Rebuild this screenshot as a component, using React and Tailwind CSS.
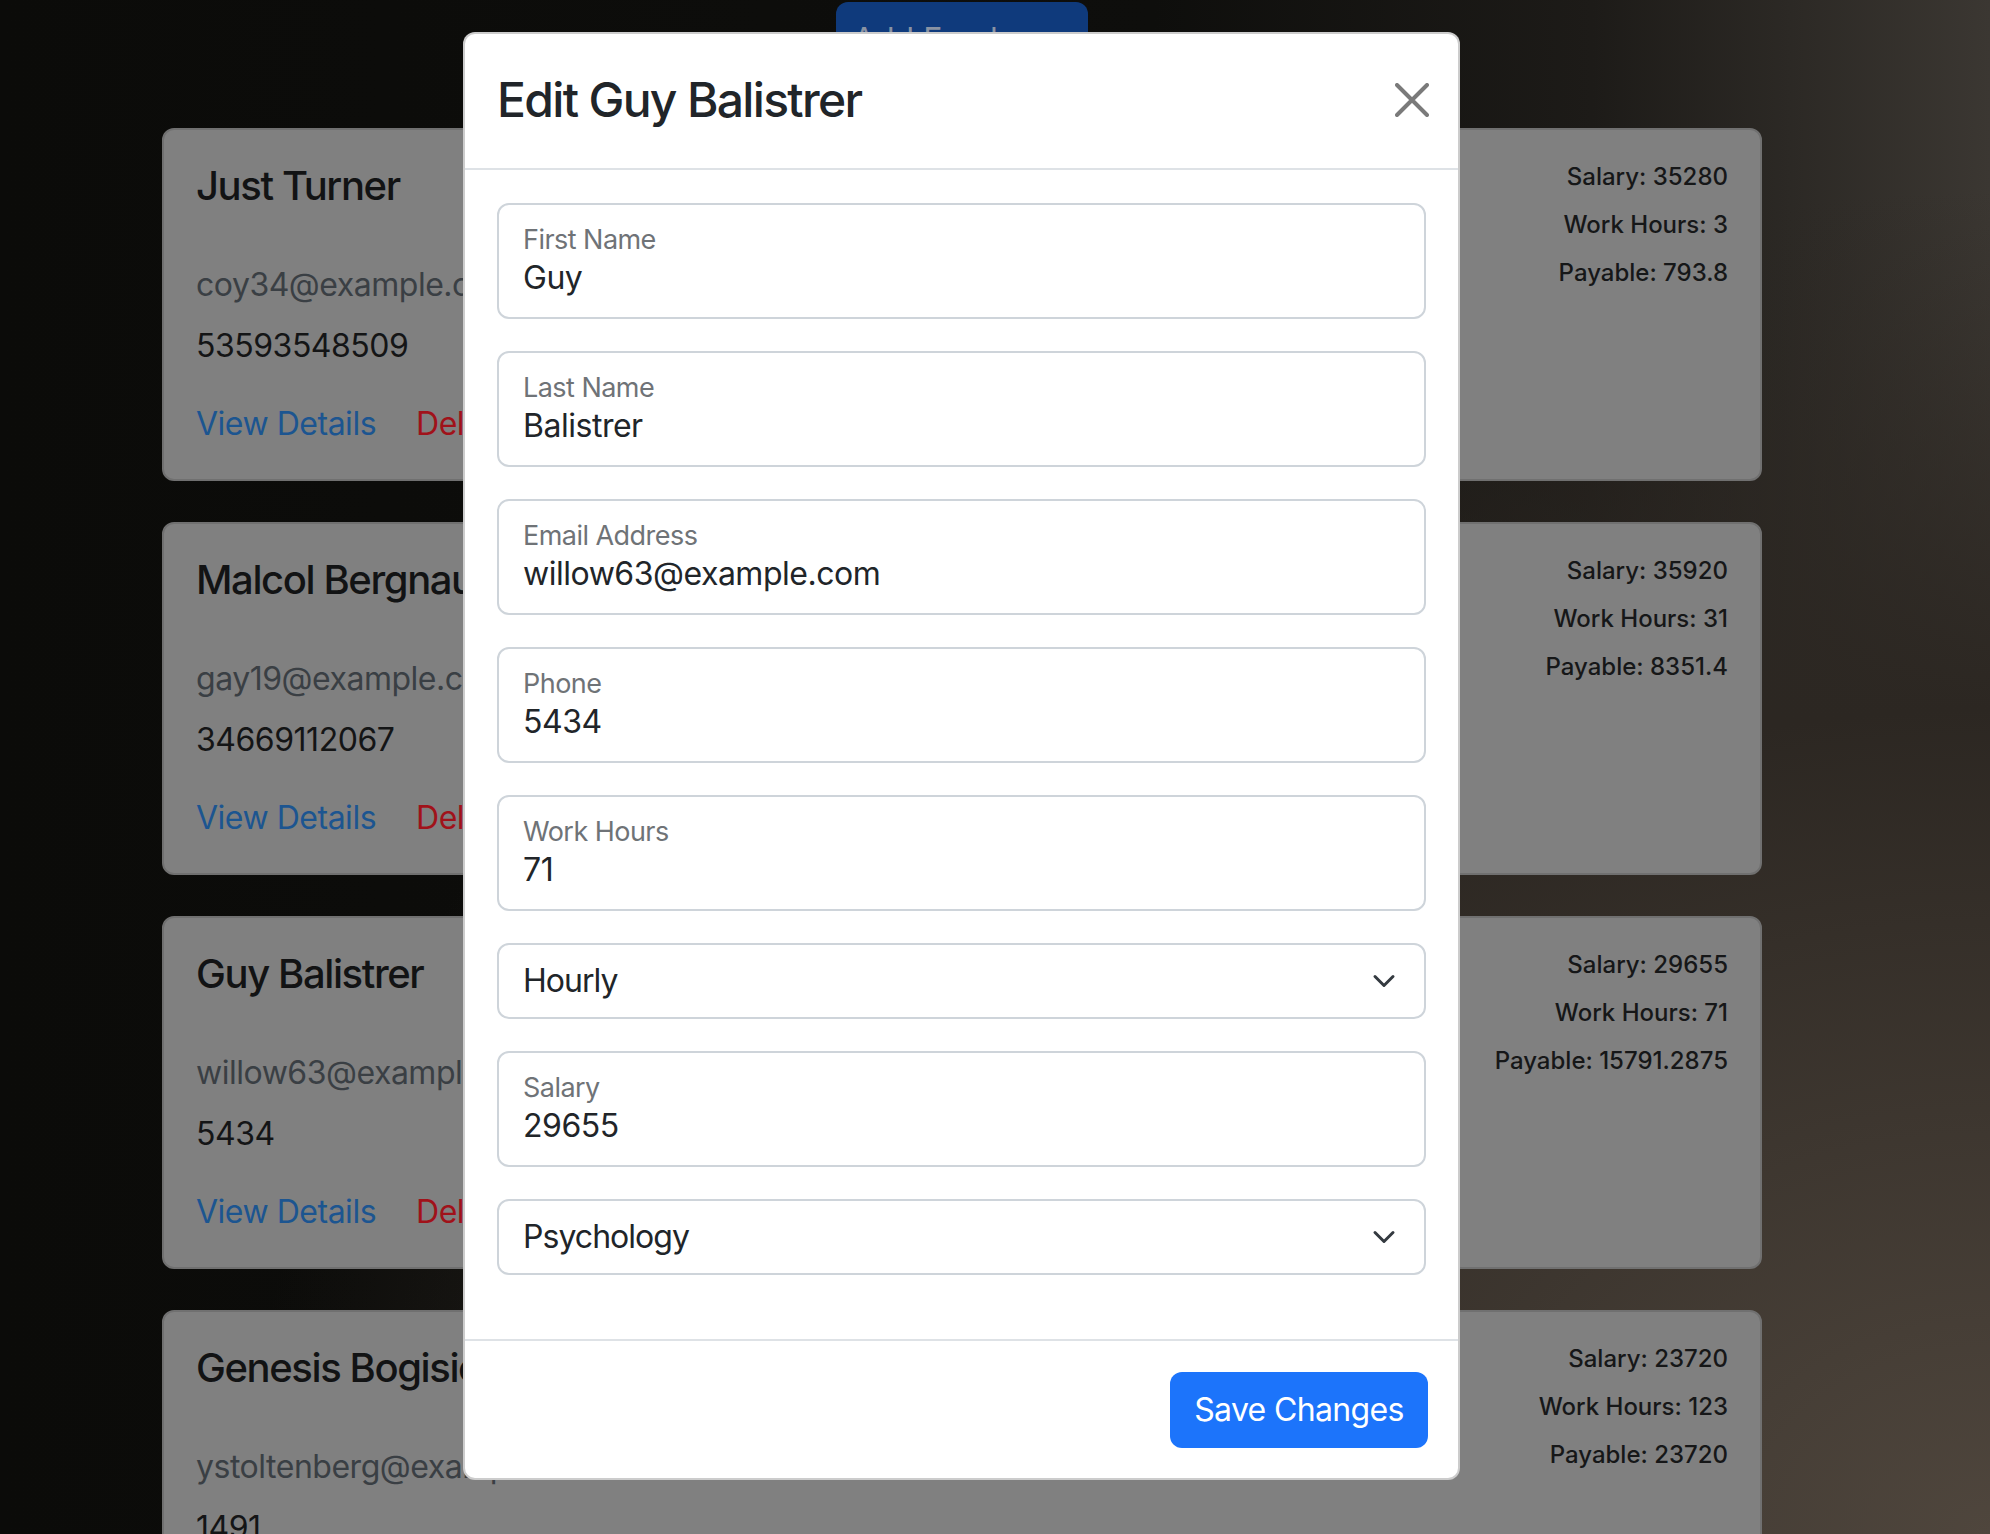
import React from "react";

const employees = [
  { name: "Just Turner", email: "coy34@example.com", phone: "53593548509", salary: "35280", hours: "3", payable: "793.8" },
  { name: "Malcol Bergnaum", email: "gay19@example.com", phone: "34669112067", salary: "35920", hours: "31", payable: "8351.4" },
  { name: "Guy Balistrer", email: "willow63@example.com", phone: "5434", salary: "29655", hours: "71", payable: "15791.2875" },
  { name: "Genesis Bogisich", email: "ystoltenberg@example.com", phone: "1491", salary: "23720", hours: "123", payable: "23720" },
];

function EmployeeCard({ emp }) {
  return (
    <div className="flex h-[353px] shrink-0 justify-between rounded-[12px] border-2 border-[#707070] bg-[#808080] p-[32px]">
      <div className="flex flex-col tracking-[-0.03em]">
        <h5 className="text-[40px] font-medium leading-[48px] tracking-[-0.035em] text-[#121314]">{emp.name}</h5>
        <p className="mt-[51px] text-[32px] leading-[48px] text-[#3a3f44]">{emp.email}</p>
        <p className="mt-[13px] text-[32px] leading-[48px] text-[#141516]">{emp.phone}</p>
        <div className="mt-[30px] flex gap-[40px] text-[32px] leading-[48px]">
          <a className="text-[#1c5590]">View Details</a>
          <a className="text-[#a0121a]">Delete</a>
        </div>
      </div>
      <div className="mt-[3px] flex flex-col items-end gap-[24px] text-[24px] font-medium leading-[24px] text-[#161718]">
        <span>Salary: {emp.salary}</span>
        <span>Work Hours: {emp.hours}</span>
        <span>Payable: {emp.payable}</span>
      </div>
    </div>
  );
}

function FloatingField({ label, value }) {
  return (
    <div className="flex h-[116px] flex-col rounded-[12px] border-2 border-[#ced4da] px-[24px] pt-[19px] tracking-[-0.03em]">
      <span className="text-[27px] leading-[32px] tracking-[-0.02em] text-[#6f7377]">{label}</span>
      <span className="mt-[2px] text-[32px] leading-[40px] text-[#212529]">{value}</span>
    </div>
  );
}

function SelectField({ value }) {
  return (
    <div className="flex h-[76px] items-center justify-between rounded-[12px] border-2 border-[#ced4da] pl-[24px] pr-[28px]">
      <span className="text-[32px] leading-[48px] tracking-[-0.03em] text-[#212529]">{value}</span>
      <svg width="24" height="24" viewBox="0 0 16 16" fill="none" stroke="#343a40" strokeWidth="2" strokeLinecap="round" strokeLinejoin="round">
        <path d="m2 5 6 6 6-6" />
      </svg>
    </div>
  );
}

function EditModal() {
  return (
    <div className="absolute left-[463px] top-[32px] flex h-[1448px] w-[997px] flex-col rounded-[12px] border-2 border-black/20 bg-white">
      {/* Header */}
      <div className="flex items-center justify-between border-b-2 border-[#dee2e6] px-[32px] pb-[32px] pt-[30px]">
        <h4 className="text-[48px] font-medium leading-[72px] tracking-[-0.035em] text-[#212529]">Edit Guy Balistrer</h4>
        <svg width="34" height="34" viewBox="0 0 34 34" className="mr-[-3px]" stroke="#7a7a7a" strokeWidth="4" strokeLinecap="round">
          <path d="M2 2 32 32M32 2 2 32" />
        </svg>
      </div>

      {/* Body */}
      <div className="flex flex-1 flex-col gap-[32px] px-[32px] pb-[62px] pt-[33px]">
        <FloatingField label="First Name" value="Guy" />
        <FloatingField label="Last Name" value="Balistrer" />
        <FloatingField label="Email Address" value="willow63@example.com" />
        <FloatingField label="Phone" value="5434" />
        <FloatingField label="Work Hours" value="71" />
        <SelectField value="Hourly" />
        <FloatingField label="Salary" value="29655" />
        <SelectField value="Psychology" />
      </div>

      {/* Footer */}
      <div className="flex justify-end border-t-2 border-[#dee2e6] pb-[30px] pl-[32px] pr-[30px] pt-[31px]">
        <button className="h-[76px] w-[258px] rounded-[12px] bg-[#1c74fb] text-[32px] leading-[48px] tracking-[-0.02em] text-white">
          Save Changes
        </button>
      </div>
    </div>
  );
}

export default function App() {
  return (
    <div className="relative h-[1534px] w-[1990px] overflow-hidden bg-[#0c0c0a] bg-[image:radial-gradient(ellipse_at_100%_100%,#4f463d_0%,#2c2722_38%,transparent_62%),linear-gradient(90deg,#0b0b09_0%,#0e0e0c_58%,#1d1b18_80%,#3b3732_100%)] font-['Inter','Liberation_Sans',sans-serif]">
      {/* Page */}
      <div className="ml-[162px] flex w-[1600px] flex-col">
        <div className="flex justify-center pt-[2px]">
          <button className="h-[76px] w-[252px] rounded-[12px] bg-[#0f3a7c] text-[32px] leading-[48px] text-[#8a93a3]">
            Add Employee
          </button>
        </div>

        <div className="mt-[50px] flex flex-col gap-[41px]">
          {employees.map((emp) => (
            <EmployeeCard key={emp.name} emp={emp} />
          ))}
        </div>
      </div>

      {/* Modal */}
      <EditModal />
    </div>
  );
}
